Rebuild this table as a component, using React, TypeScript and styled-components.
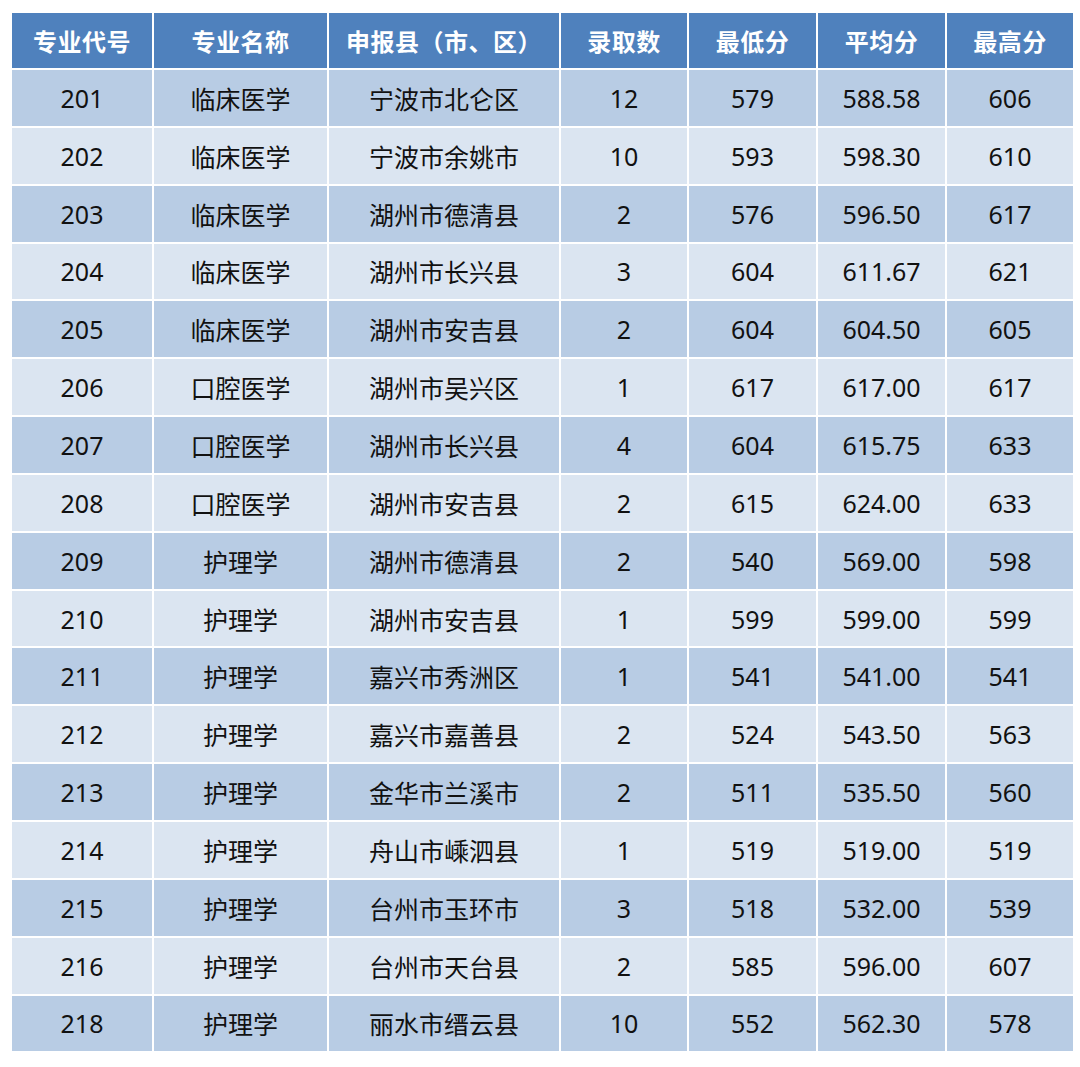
import React from "react";
import styled, { createGlobalStyle } from "styled-components";

const GlobalStyle = createGlobalStyle`
  body {
    margin: 0;
    background: #ffffff;
    font-family: "Noto Sans", "Noto Sans CJK SC", sans-serif;
  }
`;

type Row = {
  code: string;
  major: string;
  county: string;
  count: string;
  min: string;
  avg: string;
  max: string;
};

const headers = ["专业代号", "专业名称", "申报县（市、区）", "录取数", "最低分", "平均分", "最高分"];
const colWidths = [142, 175, 232, 128, 129, 129, 128];

const rows: Row[] = [
  { code: "201", major: "临床医学", county: "宁波市北仑区", count: "12", min: "579", avg: "588.58", max: "606" },
  { code: "202", major: "临床医学", county: "宁波市余姚市", count: "10", min: "593", avg: "598.30", max: "610" },
  { code: "203", major: "临床医学", county: "湖州市德清县", count: "2", min: "576", avg: "596.50", max: "617" },
  { code: "204", major: "临床医学", county: "湖州市长兴县", count: "3", min: "604", avg: "611.67", max: "621" },
  { code: "205", major: "临床医学", county: "湖州市安吉县", count: "2", min: "604", avg: "604.50", max: "605" },
  { code: "206", major: "口腔医学", county: "湖州市吴兴区", count: "1", min: "617", avg: "617.00", max: "617" },
  { code: "207", major: "口腔医学", county: "湖州市长兴县", count: "4", min: "604", avg: "615.75", max: "633" },
  { code: "208", major: "口腔医学", county: "湖州市安吉县", count: "2", min: "615", avg: "624.00", max: "633" },
  { code: "209", major: "护理学", county: "湖州市德清县", count: "2", min: "540", avg: "569.00", max: "598" },
  { code: "210", major: "护理学", county: "湖州市安吉县", count: "1", min: "599", avg: "599.00", max: "599" },
  { code: "211", major: "护理学", county: "嘉兴市秀洲区", count: "1", min: "541", avg: "541.00", max: "541" },
  { code: "212", major: "护理学", county: "嘉兴市嘉善县", count: "2", min: "524", avg: "543.50", max: "563" },
  { code: "213", major: "护理学", county: "金华市兰溪市", count: "2", min: "511", avg: "535.50", max: "560" },
  { code: "214", major: "护理学", county: "舟山市嵊泗县", count: "1", min: "519", avg: "519.00", max: "519" },
  { code: "215", major: "护理学", county: "台州市玉环市", count: "3", min: "518", avg: "532.00", max: "539" },
  { code: "216", major: "护理学", county: "台州市天台县", count: "2", min: "585", avg: "596.00", max: "607" },
  { code: "218", major: "护理学", county: "丽水市缙云县", count: "10", min: "552", avg: "562.30", max: "578" },
];

export default function App() {
  return (
    <>
      <GlobalStyle />
      <Page>
        <Table>
          <colgroup>
            {colWidths.map((w, i) => (
              <col key={i} style={{ width: w }} />
            ))}
          </colgroup>
          <thead>
            <tr>
              {headers.map((h) => (
                <HeadCell key={h}>{h}</HeadCell>
              ))}
            </tr>
          </thead>
          <tbody>
            {rows.map((r, i) => (
              <BodyRow key={r.code} $dark={i % 2 === 0}>
                <Cell>{r.code}</Cell>
                <Cell>{r.major}</Cell>
                <Cell>{r.county}</Cell>
                <Cell>{r.count}</Cell>
                <Cell>{r.min}</Cell>
                <Cell>{r.avg}</Cell>
                <Cell>{r.max}</Cell>
              </BodyRow>
            ))}
          </tbody>
        </Table>
      </Page>
    </>
  );
}

const Page = styled.div`
  width: 1080px;
  height: 1067px;
  padding: 11px 0 0 10px;
  box-sizing: border-box;
  overflow: hidden;
`;

const Table = styled.table`
  width: 1065px;
  table-layout: fixed;
  border-collapse: collapse;
`;

const HeadCell = styled.th`
  height: 55px;
  padding: 0;
  border: 2px solid #ffffff;
  background: #4f81bd;
  color: #ffffff;
  font-family: "Noto Sans CJK SC", sans-serif;
  font-size: 24px;
  font-weight: 700;
  text-align: center;
  vertical-align: middle;
  letter-spacing: 0.5px;
`;

const BodyRow = styled.tr<{ $dark: boolean }>`
  background: ${(p) => (p.$dark ? "#b8cce4" : "#dbe5f1")};
`;

const Cell = styled.td`
  height: 55.85px;
  padding: 0;
  border: 2px solid #ffffff;
  color: #111111;
  font-family: "Noto Sans", "Noto Sans CJK SC", sans-serif;
  font-size: 25px;
  text-align: center;
  vertical-align: middle;
`;
